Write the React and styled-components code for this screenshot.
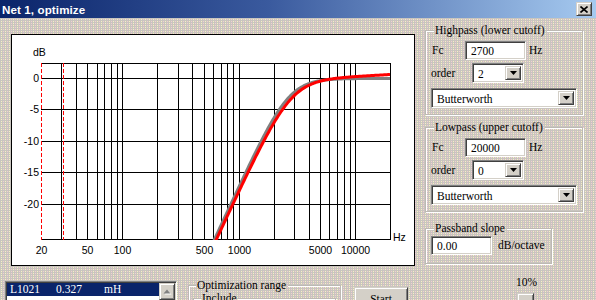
import React from 'react';
import styled, { createGlobalStyle, css } from 'styled-components';

const dither = css`
  background-color: #c9c5bf;
  background-image:
    conic-gradient(from 90deg at 3px 1px, #f2ccd4 90deg, transparent 0),
    conic-gradient(from 90deg at 1px 1px, #f6f2c2 90deg, transparent 0);
  background-size: 4px 2px, 2px 2px;
  background-attachment: fixed;
`;

const raised = css`
  box-sizing: border-box;
  background: #d4d0c8;
  border: 1px solid;
  border-color: #d4d0c8 #404040 #404040 #d4d0c8;
  box-shadow: inset 1px 1px 0 #fff, inset -1px -1px 0 #808080;
`;

const sunken = css`
  box-sizing: border-box;
  background: #fff;
  border: 1px solid;
  border-color: #808080 #fff #fff #808080;
  box-shadow: inset 1px 1px 0 #404040, inset -1px -1px 0 #d4d0c8;
`;

const Global = createGlobalStyle`
  html, body { margin: 0; padding: 0; }
  body { ${dither} }
  #root { width: 596px; height: 300px; overflow: hidden; }
`;

const serif = `"Liberation Serif", "Times New Roman", serif`;

const Window = styled.div`
  width: 596px;
  height: 300px;
  overflow: hidden;
  display: flex;
  flex-direction: column;
  font-family: ${serif};
  font-size: 11.5px;
  color: #000;
  ${dither}
`;

const TitleBar = styled.div`
  height: 18px;
  flex: none;
  display: flex;
  align-items: center;
  justify-content: space-between;
  padding: 0 4px 0 2px;
  background: linear-gradient(to right, #0a246a 0%, #3a5a9e 45%, #a6caf0 100%);
`;

const Title = styled.span`
  font-family: "Liberation Sans", Arial, sans-serif;
  font-weight: bold;
  font-size: 11.6px;
  color: #fff;
  letter-spacing: 0.1px;
`;

const CloseButton = styled.div`
  ${raised}
  width: 16px;
  height: 14px;
  display: flex;
  align-items: center;
  justify-content: center;
`;

const TopRow = styled.div`
  display: flex;
  align-items: flex-start;
  flex: none;
`;

const ChartPanel = styled.div`
  box-sizing: border-box;
  width: 404px;
  height: 232px;
  margin: 16px 0 0 11px;
  background: #fff;
  border: 1px solid #000;
  svg { display: block; }
`;

const SideColumn = styled.div`
  display: flex;
  flex-direction: column;
  align-items: flex-start;
  margin: 12px 0 0 10px;
`;

const Group = styled.div`
  position: relative;
  box-sizing: border-box;
  width: ${p => p.$w}px;
  height: ${p => p.$h}px;
  margin-bottom: ${p => p.$mb || 0}px;
  padding: ${p => p.$pad};
  border: 1px solid #bdb9b3;
  box-shadow: 1px 1px 0 #fff, inset 1px 1px 0 #fff;
  display: flex;
  flex-direction: column;
  align-items: flex-start;
`;

const Legend = styled.span`
  position: absolute;
  top: -7px;
  left: ${p => p.$left || 7}px;
  padding: 0 2px 0 1px;
  line-height: 13px;
  white-space: nowrap;
  ${dither}
`;

const FieldRow = styled.div`
  display: flex;
  align-items: center;
  margin-top: ${p => p.$mt || 0}px;
  margin-left: ${p => p.$ml || 0}px;
`;

const Label = styled.span`
  width: ${p => p.$w}px;
  line-height: 13px;
`;

const Unit = styled.span`
  margin-left: ${p => p.$ml || 3}px;
  line-height: 13px;
`;

const TextBox = styled.input`
  ${sunken}
  width: ${p => p.$w}px;
  height: 19px;
  padding: 0 0 0 5px;
  margin: 0;
  font-family: ${serif};
  font-size: 11.5px;
  color: #000;
  outline: none;
`;

const Combo = styled.div`
  ${sunken}
  width: ${p => p.$w}px;
  height: 20px;
  margin-top: ${p => p.$mt || 0}px;
  margin-left: ${p => p.$ml || 0}px;
  padding: 2px;
  display: flex;
  align-items: stretch;
`;

const ComboText = styled.span`
  flex: 1;
  padding-left: 3px;
  line-height: 16px;
`;

const DropButton = styled.span`
  ${raised}
  width: 16px;
  display: flex;
  align-items: center;
  justify-content: center;
`;

const BottomRow = styled.div`
  display: flex;
  align-items: flex-start;
  padding-left: 5px;
`;

const ListBox = styled.div`
  ${sunken}
  width: 172px;
  height: 40px;
  margin-top: 15px;
  padding: 1px;
  display: flex;
`;

const ListRows = styled.div`
  flex: 1;
  display: flex;
  flex-direction: column;
`;

const ListRow = styled.div`
  display: flex;
  height: 13px;
  line-height: 13px;
  padding-left: 3px;
  background: ${p => (p.$selected ? '#0a246a' : 'transparent')};
  color: ${p => (p.$selected ? '#fff' : '#000')};
`;

const Cell = styled.span`
  width: ${p => p.$w}px;
  white-space: nowrap;
`;

const ScrollColumn = styled.div`
  width: 16px;
  display: flex;
  flex-direction: column;
  background: #e8e6e2;
`;

const ScrollButton = styled.div`
  ${raised}
  width: 16px;
  height: 17px;
  display: flex;
  align-items: center;
  justify-content: center;
`;

const PushButton = styled.div`
  ${raised}
  width: ${p => p.$w}px;
  height: ${p => p.$h}px;
  margin-top: ${p => p.$mt || 0}px;
  margin-left: ${p => p.$ml || 0}px;
  display: flex;
  align-items: center;
  justify-content: center;
`;

const PercentColumn = styled.div`
  display: flex;
  flex-direction: column;
  align-items: flex-start;
  margin: 10px 0 0 108px;
`;

const Percent = styled.span`
  line-height: 13px;
`;

/* ---------------- chart ---------------- */

const PXD = 116.33;
const colOf = f => Math.round(41 + PXD * Math.log10(f / 20));
const gridFreqs = [30, 40, 50, 60, 70, 80, 90, 100, 200, 300, 400, 500, 600, 700, 800, 900,
  1000, 2000, 3000, 4000, 5000, 6000, 7000, 8000, 9000, 10000, 20000];
const gridRows = [63, 78, 109, 141, 172, 204, 239];
const yLabels = [['0', 78], ['-5', 109], ['-10', 141], ['-15', 172], ['-20', 204]];
const xLabels = [['20', 41], ['50', 87], ['100', 122], ['500', 204], ['1000', 239], ['5000', 320], ['10000', 355]];

const target = f => -10 * Math.log10(1 + Math.pow(2700 / f, 4));
const actual = f => {
  const x = f / 2800;
  const q = 0.68;
  const x2 = x * x;
  const h2 = (x2 * x2) / ((1 - x2) * (1 - x2) + x2 / (q * q));
  const g = f > 2000 ? 0.65 * Math.pow(Math.log10(f / 2000), 1.5) : 0;
  return 10 * Math.log10(h2) + g;
};

const curve = fn => {
  const pts = [];
  for (let x = 205; x <= 390; x += 1) {
    const f = 20 * Math.pow(10, (x - 41) / PXD);
    const y = 78.5 - fn(f) * 6.29;
    if (y < 252) pts.push(`${x},${y.toFixed(2)}`);
  }
  return pts.join(' ');
};

const ChartText = styled.text`
  font-family: "Liberation Sans", Arial, sans-serif;
  font-size: 10.5px;
  fill: #000;
`;

function Chart() {
  return (
    <svg width="402" height="230" viewBox="12 35 402 230">
      <defs>
        <clipPath id="plot">
          <rect x="41" y="60" width="350" height="180" />
        </clipPath>
      </defs>
      {gridRows.map(r => (
        <line key={r} x1="41" x2="391" y1={r + 0.5} y2={r + 0.5} stroke="#000" strokeWidth="1" shapeRendering="crispEdges" />
      ))}
      {gridFreqs.map(f => (
        <line key={f} x1={colOf(f) + 0.5} x2={colOf(f) + 0.5} y1="63" y2="240" stroke="#000" strokeWidth="1" shapeRendering="crispEdges" />
      ))}
      <line x1="41.5" x2="41.5" y1="63" y2="240" stroke="#f00" strokeWidth="1" strokeDasharray="4 2" shapeRendering="crispEdges" />
      <line x1="63.5" x2="63.5" y1="63" y2="240" stroke="#f00" strokeWidth="1" strokeDasharray="4 2" shapeRendering="crispEdges" />
      <g clipPath="url(#plot)">
        <polyline points={curve(target)} fill="none" stroke="#808080" strokeWidth="3" strokeLinejoin="round" />
        <polyline points={curve(actual)} fill="none" stroke="#ff0000" strokeWidth="3" strokeLinejoin="round" />
      </g>
      <ChartText x="33" y="55.5">dB</ChartText>
      {yLabels.map(([t, r]) => (
        <ChartText key={t} x="39" y={r + 4.3} textAnchor="end">{t}</ChartText>
      ))}
      {xLabels.map(([t, c]) => (
        <ChartText key={t} x={c + 0.5} y="253.8" textAnchor="middle">{t}</ChartText>
      ))}
      <ChartText x="393" y="241.2">Hz</ChartText>
    </svg>
  );
}

const DownArrow = () => (
  <svg width="7" height="4" viewBox="0 0 7 4"><path d="M0 0h7L3.5 4z" fill="#000" /></svg>
);

const UpArrowGray = () => (
  <svg width="9" height="6" viewBox="0 0 9 6">
    <path d="M1.5 5.5L5 1.5 8.5 5.5z" fill="#fff" />
    <path d="M0.5 4.5L4 0.5 7.5 4.5z" fill="#808080" />
  </svg>
);

const CloseGlyph = () => (
  <svg width="8" height="7" viewBox="0 0 8 7">
    <path d="M0.5 0.5L7.5 6.5M7.5 0.5L0.5 6.5" stroke="#000" strokeWidth="1.6" />
  </svg>
);

function FilterGroup({ title, fc, order, mb }) {
  return (
    <Group $w={158} $h={85} $mb={mb} $pad="10px 0 0 6px">
      <Legend $left={8}>{title}</Legend>
      <FieldRow>
        <Label $w={33}>Fc</Label>
        <TextBox $w={61} readOnly value={fc} />
        <Unit>Hz</Unit>
      </FieldRow>
      <FieldRow $mt={3} $ml={-1}>
        <Label $w={41}>order</Label>
        <Combo $w={52}>
          <ComboText>{order}</ComboText>
          <DropButton><DownArrow /></DropButton>
        </Combo>
      </FieldRow>
      <Combo $w={146} $mt={5} $ml={-1}>
        <ComboText>Butterworth</ComboText>
        <DropButton><DownArrow /></DropButton>
      </Combo>
    </Group>
  );
}

export default function App() {
  return (
    <>
      <Global />
      <Window>
        <TitleBar>
          <Title>Net 1, optimize</Title>
          <CloseButton><CloseGlyph /></CloseButton>
        </TitleBar>
        <TopRow>
          <ChartPanel><Chart /></ChartPanel>
          <SideColumn>
            <FilterGroup title="Highpass (lower cutoff)" fc="2700" order="2" mb={12} />
            <FilterGroup title="Lowpass (upper cutoff)" fc="20000" order="0" mb={16} />
            <Group $w={127} $h={36} $pad="7px 0 0 5px">
              <Legend $left={8}>Passband slope</Legend>
              <FieldRow>
                <TextBox $w={61} readOnly value="0.00" />
                <Unit $ml={6}>dB/octave</Unit>
              </FieldRow>
            </Group>
          </SideColumn>
        </TopRow>
        <BottomRow>
          <ListBox>
            <ListRows>
              <ListRow $selected>
                <Cell $w={46}>L1021</Cell>
                <Cell $w={48}>0.327</Cell>
                <Cell $w={30}>mH</Cell>
              </ListRow>
            </ListRows>
            <ScrollColumn>
              <ScrollButton><UpArrowGray /></ScrollButton>
            </ScrollColumn>
          </ListBox>
          <Group $w={153} $h={40} $pad="12px 4px 0 4px" style={{ marginTop: 19, marginLeft: 11 }}>
            <Legend>Optimization range</Legend>
            <Group $w={143} $h={20} $pad="0">
              <Legend>Include</Legend>
            </Group>
          </Group>
          <PushButton $w={54} $h={24} $mt={21} $ml={13}>Start</PushButton>
          <PercentColumn>
            <Percent>10%</Percent>
            <PushButton $w={17} $h={20} $mt={4} $ml={1} />
          </PercentColumn>
        </BottomRow>
      </Window>
    </>
  );
}
